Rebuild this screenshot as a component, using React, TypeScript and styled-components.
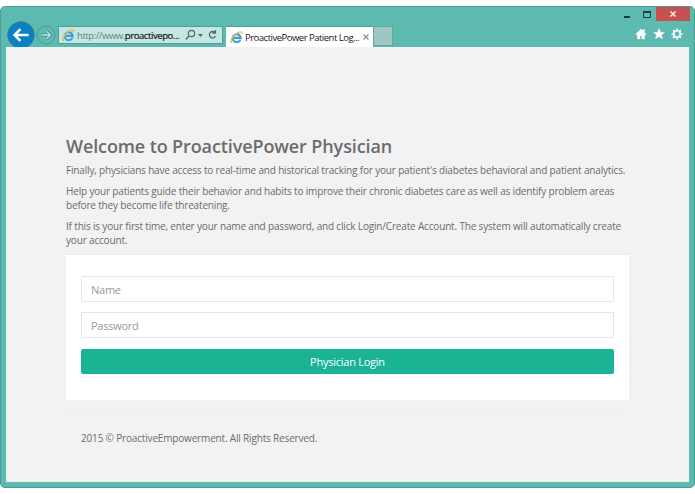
import styled, { createGlobalStyle } from "styled-components";
import { useState } from "react";

const GlobalStyle = createGlobalStyle`
    * {
        box-sizing: border-box;
    }

    body {
        margin: 0;
        background-color: #ffffff;
        overflow: hidden;
    }
`;

const BrowserWindow = styled.div`
    display: flex;
    flex-direction: column;
    width: 695px;
    height: 482px;
    margin-top: 6px;
    padding: 0 5px 5px;
    border: 1px solid #4a9c93;
    border-radius: 5px;
    background-color: #5cbab1;
    font-family: "Open Sans", "Noto Sans", sans-serif;
`;

const TitleBar = styled.div`
    display: flex;
    justify-content: flex-end;
    height: 14px;
    margin-right: -1px;
`;

const WindowButton = styled.button<{ $width: number; $close?: boolean }>`
    display: flex;
    align-items: center;
    justify-content: center;
    width: ${(props) => props.$width}px;
    height: 14px;
    padding: 0;
    border: none;
    background-color: ${(props) => (props.$close ? "#c75050" : "transparent")};
`;

const Toolbar = styled.div`
    display: flex;
    height: 26px;
    padding-left: 1px;
`;

const BackButton = styled.button`
    width: 28px;
    height: 26px;
    padding: 0;
    border: none;
    background: none;
    overflow: hidden;
`;

const ForwardButton = styled.button`
    width: 20px;
    height: 26px;
    margin: 0 2px 0 1px;
    padding: 0;
    border: none;
    background: none;
`;

const AddressBar = styled.div`
    display: flex;
    align-items: center;
    width: 165px;
    height: 18px;
    margin-top: 5px;
    padding-left: 3px;
    border: 1px solid #4da198;
    background-color: #c5e7e3;
    font-family: "Open Sans", sans-serif;
    font-size: 9.5px;
    color: #6c7d7b;
    white-space: nowrap;

    svg {
        flex-shrink: 0;
    }
`;

const Address = styled.span`
    width: 107px;
    margin-left: 2px;
    letter-spacing: -0.42px;

    b {
        font-weight: 400;
        color: #101817;
        -webkit-text-stroke: 0.2px #101817;
    }
`;

const Tab = styled.div`
    display: flex;
    align-items: center;
    width: 147px;
    height: 21px;
    margin: 5px 0 0 3px;
    padding-left: 4px;
    border-top: 1px solid #4da198;
    background-color: #ffffff;
    font-family: "Open Sans", sans-serif;
    font-size: 9.5px;
    color: #202020;
    white-space: nowrap;

    svg {
        flex-shrink: 0;
    }
`;

const TabTitle = styled.span`
    width: 118px;
    margin-left: 2px;
    letter-spacing: -0.5px;
`;

const NewTab = styled.div`
    width: 20px;
    height: 20px;
    margin-top: 5px;
    border: 1px solid #65a8a0;
    background-color: #9cc7c2;
`;

const Tools = styled.div`
    display: flex;
    gap: 6px;
    margin: 7px 6px 0 auto;
`;

const Page = styled.main`
    flex: 1;
    padding: 89px 60px 0;
    background-color: #f2f2f2;
    color: #6a6c6e;
    font-size: 10px;
    letter-spacing: -0.17px;
    line-height: 14px;
`;

const Heading = styled.h2`
    margin: 0 0 6px;
    font-size: 18px;
    font-weight: 600;
    letter-spacing: -0.11px;
    line-height: 21px;
    white-space: nowrap;
`;

const Paragraph = styled.p`
    margin: 0 0 7px;
    white-space: nowrap;
`;

const LoginForm = styled.form`
    display: flex;
    flex-direction: column;
    gap: 10px;
    height: 146px;
    padding: 21px 15px 0;
    border-top: 1px solid #e9ebec;
    background-color: #ffffff;
`;

const Field = styled.input`
    width: 100%;
    height: 26px;
    padding: 0 9px;
    border: 1px solid #e5e6e7;
    border-radius: 1px;
    outline: none;
    background-color: #ffffff;
    color: #6a6c6e;
    font-family: inherit;
    font-size: 11px;
    letter-spacing: -0.25px;

    &::placeholder {
        color: #999999;
        opacity: 1;
    }
`;

const LoginButton = styled.button`
    width: 100%;
    height: 25px;
    margin-top: 1px;
    padding: 0;
    border: none;
    border-radius: 2px;
    background-color: #1ab394;
    color: #ffffff;
    font-family: inherit;
    font-size: 11px;
    letter-spacing: -0.25px;
    cursor: pointer;
`;

const Footer = styled.footer`
    margin-top: 14px;
    padding: 16px 15px 0;
    border-top: 1px solid #eeeeee;
`;

const BrowserLogo = () => (
    <svg width="13" height="13" viewBox="0 0 13 13" fill="none">
        <path d="M10.5 8.5A4 4 0 1 1 10.7 6.9H4" stroke="#3d9fd8" strokeWidth="2.1" />
        <path
            d="M2.2 12C-.6 11.5 1.4 6.7 5.2 3.4C8.6.5 12.5-.2 11.7 3"
            stroke="#e8bd3c"
            strokeWidth="1.3"
        />
    </svg>
);

export default function App() {
    const [name, setName] = useState("");
    const [password, setPassword] = useState("");

    return (
        <>
            <GlobalStyle />
            <BrowserWindow>
                <TitleBar>
                    <WindowButton $width={20} aria-label="Minimize">
                        <svg width="6" height="10">
                            <path d="M0 7h6v2H0z" fill="#203c39" />
                        </svg>
                    </WindowButton>
                    <WindowButton $width={19} aria-label="Maximize">
                        <svg width="8" height="7">
                            <path d="M.5 1v5.5h7V1" fill="none" stroke="#203c39" />
                            <path d="M0 0h8v2H0z" fill="#203c39" />
                        </svg>
                    </WindowButton>
                    <WindowButton $width={34} $close aria-label="Close">
                        <svg width="6" height="6">
                            <path d="M.5.5l5 5m0-5l-5 5" stroke="#fff" strokeWidth="1.3" />
                        </svg>
                    </WindowButton>
                </TitleBar>
                <Toolbar>
                    <BackButton aria-label="Back">
                        <svg width="28" height="28" viewBox="0 0 28 28" fill="none">
                            <circle cx="14" cy="14" r="13.3" fill="#0b80c3" stroke="#397f9b" />
                            <path
                                d="M21.5 14H8M13.4 8.2L7.6 14l5.8 5.8"
                                stroke="#fff"
                                strokeWidth="2.6"
                            />
                        </svg>
                    </BackButton>
                    <ForwardButton aria-label="Forward">
                        <svg width="20" height="26" viewBox="0 0 20 26" fill="none">
                            <circle cx="10" cy="14" r="9" stroke="#479c94" />
                            <path
                                d="M5 14h9M10.5 10l4 4-4 4"
                                stroke="#438f87"
                                strokeWidth="3"
                            />
                            <path
                                d="M5.3 14h8.5M10.5 10.3l3.7 3.7-3.7 3.7"
                                stroke="#b4e4df"
                                strokeWidth="1.5"
                            />
                        </svg>
                    </ForwardButton>
                    <AddressBar>
                        <BrowserLogo />
                        <Address>
                            http://www.<b>proactivepo...</b>
                        </Address>
                        <svg width="36" height="12" viewBox="0 0 36 12" fill="none">
                            <circle cx="7.5" cy="4.5" r="3.2" stroke="#526b68" strokeWidth="1.2" />
                            <path d="M5 7L1.8 10.5" stroke="#526b68" strokeWidth="1.4" />
                            <path d="M14 5h5l-2.5 3z" fill="#526b68" />
                            <path
                                d="M31 3.6A3.2 3.2 0 1 0 31.5 7M31.5 1v3.2h-3.2"
                                stroke="#526b68"
                                strokeWidth="1.3"
                            />
                        </svg>
                    </AddressBar>
                    <Tab>
                        <BrowserLogo />
                        <TabTitle>ProactivePower Patient Log...</TabTitle>
                        <svg width="6" height="6">
                            <path d="M.5.5l5 5m0-5l-5 5" stroke="#8c8c8c" strokeWidth="1.2" />
                        </svg>
                    </Tab>
                    <NewTab />
                    <Tools>
                        <svg width="12" height="12" viewBox="0 0 12 12">
                            <path
                                d="M6 .8L.8 6.2l.9.9.7-.7V11h2.7V7.8h1.8V11h2.7V6.4l.7.7.9-.9L9.5 4.4V1.6H8v1.3z"
                                fill="#fff"
                                stroke="#fff"
                                strokeWidth=".4"
                            />
                        </svg>
                        <svg width="12" height="12" viewBox="0 0 12 12">
                            <path
                                d="M6 .5l1.5 3.7 4 .2-3.1 2.5 1.1 3.9L6 8.6l-3.5 2.2 1.1-3.9L.5 4.4l4-.2z"
                                fill="#fff"
                                stroke="#fff"
                                strokeWidth=".4"
                            />
                        </svg>
                        <svg width="12" height="12" viewBox="0 0 12 12" fill="none" stroke="#fff">
                            <circle cx="6" cy="6" r="3.2" strokeWidth="1.6" />
                            <path
                                d="M6 .5v2M6 9.5v2M.5 6h2M9.5 6h2M2.1 2.1l1.4 1.4M8.5 8.5l1.4 1.4M2.1 9.9l1.4-1.4M8.5 3.5l1.4-1.4"
                                strokeWidth="1.7"
                            />
                        </svg>
                    </Tools>
                </Toolbar>
                <Page>
                    <Heading>Welcome to ProactivePower Physician</Heading>
                    <Paragraph>
                        Finally, physicians have access to real-time and historical tracking for
                        your patient's diabetes behavioral and patient analytics.
                    </Paragraph>
                    <Paragraph>
                        Help your patients guide their behavior and habits to improve their chronic
                        diabetes care as well as identify problem areas
                        <br />
                        before they become life threatening.
                    </Paragraph>
                    <Paragraph>
                        If this is your first time, enter your name and password, and click
                        Login/Create Account. The system will automatically create
                        <br />
                        your account.
                    </Paragraph>
                    <LoginForm onSubmit={(e) => e.preventDefault()}>
                        <Field
                            type="text"
                            placeholder="Name"
                            value={name}
                            onChange={(e) => setName(e.target.value)}
                        />
                        <Field
                            type="password"
                            placeholder="Password"
                            value={password}
                            onChange={(e) => setPassword(e.target.value)}
                        />
                        <LoginButton type="submit">Physician Login</LoginButton>
                    </LoginForm>
                    <Footer>2015 © ProactiveEmpowerment. All Rights Reserved.</Footer>
                </Page>
            </BrowserWindow>
        </>
    );
}
